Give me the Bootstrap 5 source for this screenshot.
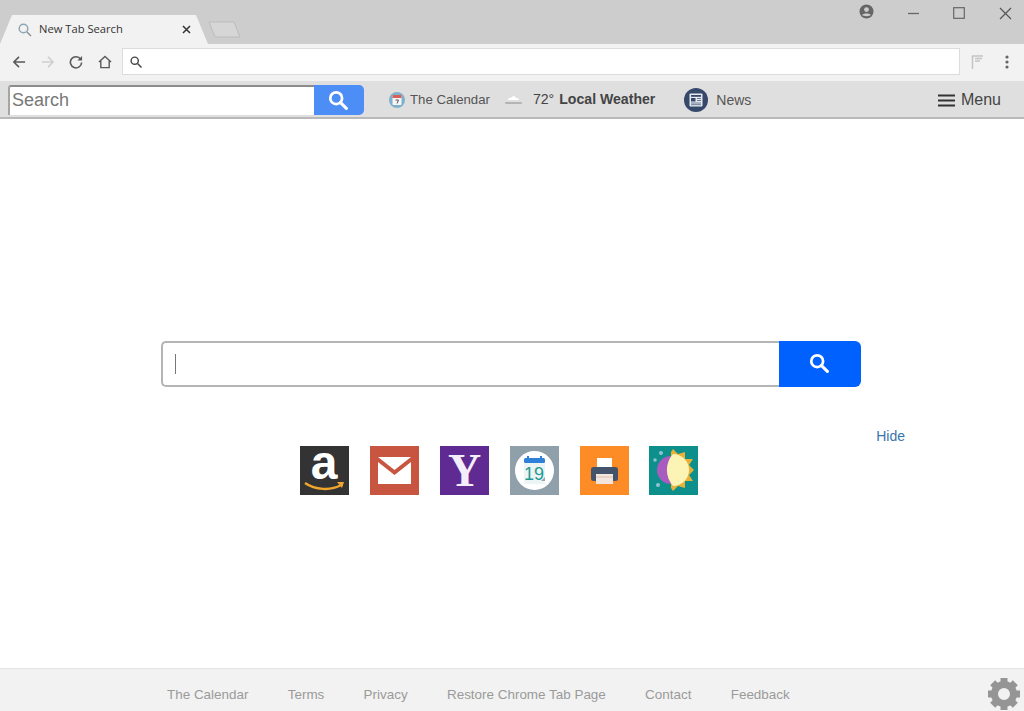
<!DOCTYPE html>
<html>
  <head>
    <title>New Tab Search</title>
    <link href="https://cdn.jsdelivr.net/npm/bootstrap@5.3.3/dist/css/bootstrap.min.css" rel="stylesheet" />
    <script src="https://cdn.jsdelivr.net/npm/bootstrap@5.3.3/dist/js/bootstrap.bundle.min.js"></script>
    <style>
      body { font-family: "Liberation Sans", Arial, sans-serif; background: #fff; overflow: hidden; }
      .page-wrap { height: 711px; width: 1024px; }

      .tab-strip { height: 44px; background: #cdcdcd; flex: none; }
      .active-tab { width: 208px; height: 29px; margin-top: 15px; background: #f2f2f2; padding-left: 18px; clip-path: polygon(12px 0, 196px 0, 208px 100%, 0 100%); font-family: "Open Sans", sans-serif; font-size: 11.2px; color: #333; flex: none; }
      .tab-title { margin-left: 7px; width: 143px; }
      .new-tab { width: 34px; height: 17px; margin-top: 21px; flex: none; }
      .win-controls { margin-right: -4px; }
      .avatar-icon { margin-top: 4px; }
      .win-btn { width: 46px; height: 26px; }

      .tool-strip { height: 37px; background: #f2f2f2; padding: 4px 0 6px 12px; flex: none; }
      .tool-icon { width: 14px; height: 14px; margin-right: 14.5px; }
      .omnibox { width: 838px; height: 27px; margin-left: -4px; background: #fff; border: 1px solid #dcdcdc; padding-left: 7px; flex: none; }
      .flag-icon { margin-left: 11px; }
      .kebab-icon { margin-left: 22px; }

      .ext-strip { height: 38px; background: #dfdfdf; border-bottom: 2px solid #b9b9b9; padding: 2px 0 0 8px; flex: none; color: #555; font-size: 13.2px; }
      .ext-search { width: 356px; height: 30px; flex: none; }
      .ext-search .form-control { height: 30px; min-height: 0; font-size: 18px; padding: 0 2px 2px; border-radius: 3px 0 0 0; border: 0; border-top: 2px solid #8c8c8c; border-left: 2px solid #a5a5a5; color: #777; box-shadow: none; }
      .ext-search .form-control::placeholder { color: #777; }
      .ext-search .btn { width: 50px; height: 30px; padding: 0 2px 0 0; background: #4c8df6; border: 0; border-radius: 0 5px 5px 0; }
      .ext-cal { margin-left: 25px; }
      .ext-cal span { margin-left: 5px; }
      .ext-weather { margin-left: 15px; color: #444; font-size: 14.1px; }
      .ext-weather .temp { margin-left: 11px; }
      .ext-weather b { margin-left: 5px; }
      .ext-news { margin-left: 29px; font-size: 14px; }
      .ext-news span { margin-left: 8px; }
      .ext-menu { margin-left: auto; margin-right: 23px; font-size: 16px; color: #444; }
      .ext-menu svg { margin-right: 6px; }

      .main-area { padding-top: 222px; }
      .big-search { width: 700px; height: 46px; margin-left: 161px; }
      .big-input { flex: 1; border: 2px solid #b5b5b5; border-right: 0; border-radius: 5px 0 0 5px; padding-left: 12px; }
      .caret-line { width: 1px; height: 20px; background: #777; }
      .big-btn { width: 82px; padding: 0 3px 2px 0; background: #0061ff; border: 0; border-radius: 0 6px 6px 0; }
      .tile-row { margin: 41px 0 0 300px; width: 605px; }
      .tile-list { gap: 20.9px; margin-top: 18px; }
      .tile-list svg { width: 49px; height: 49px; display: block; overflow: visible; }
      .hide-link { font-size: 14px; color: #3a74ab; text-decoration: none; margin-left: auto; line-height: 16px; }

      .foot-strip { height: 43px; background: #f2f2f2; border-top: 1px solid #e4e4e4; padding: 10px 0 0 167px; flex: none; font-size: 13.45px; gap: 39.3px; }
      .foot-strip a { color: #9a9a9a; text-decoration: none; }
      .gear-icon { margin-left: auto; margin-right: 4px; margin-top: -2px; }
    </style>
  </head>
  <body>
    <div class="page-wrap d-flex flex-column">

      <div class="tab-strip d-flex align-items-start">
        <div class="active-tab d-flex align-items-center">
          <svg width="14" height="14" viewBox="0 0 14 14"><circle cx="5.5" cy="5.5" r="4.3" fill="none" stroke="#8fa6b5" stroke-width="1.5"/><path d="M9 9l4 4" stroke="#8a949c" stroke-width="1.6"/></svg>
          <span class="tab-title">New Tab Search</span>
          <svg width="9" height="9" viewBox="0 0 9 9"><path d="M1 1l7 7M8 1l-7 7" stroke="#333" stroke-width="1.5"/></svg>
        </div>
        <svg class="new-tab" viewBox="0 0 34 17"><path d="M1 1h25l6 15H7z" fill="#d6d6d6" stroke="#bcbcbc"/></svg>
        <div class="win-controls d-flex align-items-start ms-auto">
          <svg class="avatar-icon me-3" width="15" height="15" viewBox="0 0 15 15"><circle cx="7.5" cy="7.5" r="7" fill="#666"/><circle cx="7.5" cy="5.6" r="2.4" fill="#cdcdcd"/><path d="M3.2 11c1-2 7.600-2 8.600 0-1.200 1.500-7.400 1.500-8.600 0z" fill="#cdcdcd"/></svg>
          <div class="win-btn d-flex align-items-center justify-content-center">
            <svg width="11" height="11" viewBox="0 0 11 11"><path d="M0 5.500h11" stroke="#666" stroke-width="1.300"/></svg>
          </div>
          <div class="win-btn d-flex align-items-center justify-content-center">
            <svg width="12" height="12" viewBox="0 0 12 12"><rect x=".7" y=".7" width="10.600" height="10.600" fill="none" stroke="#666" stroke-width="1.200"/></svg>
          </div>
          <div class="win-btn d-flex align-items-center justify-content-center">
            <svg width="13" height="13" viewBox="0 0 13 13"><path d="M1 1l11 11M12 1L1 12" stroke="#555" stroke-width="1.200"/></svg>
          </div>
        </div>
      </div>

      <div class="tool-strip d-flex align-items-center">
        <svg class="tool-icon" viewBox="0 0 15 15"><path d="M14 7.500H2M7.500 2L2 7.500 7.500 13" fill="none" stroke="#5a5a5a" stroke-width="1.700"/></svg>
        <svg class="tool-icon" viewBox="0 0 15 15"><path d="M1 7.500h12M7.500 2L13 7.500 7.500 13" fill="none" stroke="#d0d0d0" stroke-width="1.700"/></svg>
        <svg class="tool-icon" viewBox="0 0 15 15"><path d="M12.500 4.500A6 6 0 1 0 13.500 8" fill="none" stroke="#5a5a5a" stroke-width="1.700"/><path d="M14 1v5H9z" fill="#5a5a5a"/></svg>
        <svg class="tool-icon" viewBox="0 0 15 15"><path d="M1 7.500L7.500 1.500 14 7.500M3 6.500V13.500H12V6.500" fill="none" stroke="#5a5a5a" stroke-width="1.500"/></svg>
        <div class="omnibox d-flex align-items-center">
          <svg width="12" height="12" viewBox="0 0 12 12"><circle cx="4.700" cy="4.700" r="3.600" fill="none" stroke="#444" stroke-width="1.400"/><path d="M7.500 7.500l4 4" stroke="#444" stroke-width="1.500"/></svg>
        </div>
        <svg class="flag-icon" width="12" height="14" viewBox="0 0 12 14"><path d="M1.500 14V1H12M4 3.500h7M4 6h5" fill="none" stroke="#c4c4c4" stroke-width="1.500"/></svg>
        <svg class="kebab-icon" width="4" height="14" viewBox="0 0 4 14"><circle cx="2" cy="2" r="1.600" fill="#666"/><circle cx="2" cy="7" r="1.600" fill="#666"/><circle cx="2" cy="12" r="1.600" fill="#666"/></svg>
      </div>

      <div class="ext-strip d-flex align-items-center">
        <div class="ext-search input-group flex-nowrap">
          <input type="text" class="form-control" placeholder="Search" />
          <button type="button" class="btn d-flex align-items-center justify-content-center">
            <svg width="20" height="20" viewBox="0 0 22 22"><circle cx="9" cy="9" r="6.500" fill="none" stroke="#fff" stroke-width="3"/><path d="M13.800 13.800l6.400 6.400" stroke="#fff" stroke-width="3.400" stroke-linecap="round"/></svg>
          </button>
        </div>
        <div class="ext-cal d-flex align-items-center">
          <svg width="16" height="16" viewBox="0 0 16 16"><circle cx="8" cy="8" r="8" fill="#7fb1cb"/><rect x="3.500" y="3" width="9" height="10" rx="1" fill="#f6f6f6"/><rect x="3.500" y="3" width="9" height="3" fill="#d9605a"/><path d="M6.500 8h3l-1.500 3.500" fill="none" stroke="#555" stroke-width="1"/></svg>
          <span>The Calendar</span>
        </div>
        <div class="ext-weather d-flex align-items-center">
          <svg width="17" height="11" viewBox="0 0 17 11"><path d="M3 6c0-2 2-2.500 3-2 .8-2.500 4.500-2.500 5.200 0 1.500-.2 2.800 .8 2.800 2z" fill="#fff"/><rect y="8" width="17" height="2" rx="1" fill="#b4b4b4"/></svg>
          <span class="temp">72°</span>
          <b>Local Weather</b>
        </div>
        <div class="ext-news d-flex align-items-center">
          <svg width="24" height="24" viewBox="0 0 24 24"><circle cx="12" cy="12" r="12" fill="#36496b"/><rect x="5.500" y="5.500" width="13" height="13" rx="1" fill="#e6e9ee"/><rect x="7" y="7" width="10" height="1.800" fill="#36496b"/><rect x="7" y="10" width="4.500" height="3.500" fill="#36496b"/><path d="M13 10.500h4M13 12.500h4M7 15h10M7 16.700h10" stroke="#6b7a94"/></svg>
          <span>News</span>
        </div>
        <div class="ext-menu d-flex align-items-center">
          <svg width="17" height="13" viewBox="0 0 17 13"><path d="M0 1.500h17M0 6.500h17M0 11.500h17" stroke="#333" stroke-width="2.200"/></svg>
          Menu
        </div>
      </div>

      <div class="main-area flex-grow-1">
        <div class="big-search d-flex">
          <div class="big-input d-flex align-items-center"><div class="caret-line"></div></div>
          <button type="button" class="big-btn btn d-flex align-items-center justify-content-center">
            <svg width="20" height="20" viewBox="0 0 22 22"><circle cx="9" cy="9" r="6.500" fill="none" stroke="#fff" stroke-width="3"/><path d="M13.800 13.800l6.400 6.400" stroke="#fff" stroke-width="3.400" stroke-linecap="round"/></svg>
          </button>
        </div>
        <div class="tile-row d-flex align-items-start">
          <div class="tile-list d-flex">
            <svg viewBox="0 0 49 49"><rect width="49" height="49" fill="#333"/><text x="24" y="33" text-anchor="middle" font-family="Liberation Sans" font-weight="700" font-size="48" fill="#fff">a</text><path d="M5 37c10 7 26 8 36 2" fill="none" stroke="#f0a52c" stroke-width="2.500"/><path d="M37 36l7 0-2 6z" fill="#f0a52c"/></svg>
            <svg viewBox="0 0 49 49"><rect width="49" height="49" fill="#c8553f"/><path d="M8 11h33L24.500 24z" fill="#fff"/><path d="M8 16l16.500 13L41 16v22H8z" fill="#fff"/></svg>
            <svg viewBox="0 0 49 49"><rect width="49" height="49" fill="#5f2a91"/><text x="24.500" y="40" text-anchor="middle" font-family="Liberation Serif" font-weight="700" font-size="46" fill="#f4eefa">Y</text></svg>
            <svg viewBox="0 0 49 49"><rect width="49" height="49" fill="#8fa0aa"/><circle cx="24.500" cy="24.500" r="19.500" fill="#fff"/><rect x="14" y="15" width="21" height="23" fill="#edf4f4"/><rect x="14" y="12" width="21" height="5" rx="1.500" fill="#2f80d8"/><path d="M18 10v4M31 10v4" stroke="#2f80d8" stroke-width="2"/><text x="24" y="34" text-anchor="middle" font-family="Liberation Sans" font-size="18" fill="#1f9b93">19</text><path d="M31 35l4-4v4z" fill="#9aa9ae"/></svg>
            <svg viewBox="0 0 49 49"><rect width="49" height="49" fill="#fd8b26"/><rect x="17" y="12" width="15" height="12" fill="#fff"/><rect x="11" y="21" width="27" height="14" rx="2.500" fill="#43536b"/><rect x="16" y="28" width="17" height="10" fill="#f3e4de"/><path d="M16 31h17" stroke="#d9bdb3"/></svg>
            <svg viewBox="0 0 49 49"><rect width="49" height="49" fill="#0d8f8b"/><circle cx="22" cy="24" r="14" fill="#a85cc0"/><path d="M22 6L24 3l5 5 7-2 0 7 8 0-4 6 5 5-5 5 4 6-8 0 0 7-7-2-5 5-2-3z" fill="#e9b13a"/><path d="M24 8A16 16 0 0 1 24 40 24 24 0 0 1 24 8z" fill="#fbf4b4"/><circle cx="12" cy="7" r="2" fill="#8fc3cf"/><circle cx="6" cy="14" r="1.800" fill="#8fc3cf"/><circle cx="9" cy="39" r="2" fill="#8fc3cf"/></svg>
          </div>
          <a class="hide-link" href="#">Hide</a>
        </div>
      </div>

      <div class="foot-strip d-flex align-items-center">
        <a href="#">The Calendar</a>
        <a href="#">Terms</a>
        <a href="#">Privacy</a>
        <a href="#">Restore Chrome Tab Page</a>
        <a href="#">Contact</a>
        <a href="#">Feedback</a>
        <svg class="gear-icon" width="32" height="32" viewBox="0 0 32 32">
          <circle cx="16" cy="16" r="9.500" fill="none" stroke="#959595" stroke-width="7"/>
          <g fill="#959595">
            <rect x="12.500" y="0" width="7" height="6"/>
            <rect x="12.500" y="26" width="7" height="6"/>
            <rect x="0" y="12.500" width="6" height="7"/>
            <rect x="26" y="12.500" width="6" height="7"/>
            <rect x="12.500" y="0" width="7" height="6" transform="rotate(45 16 16)"/>
            <rect x="12.500" y="26" width="7" height="6" transform="rotate(45 16 16)"/>
            <rect x="0" y="12.500" width="6" height="7" transform="rotate(45 16 16)"/>
            <rect x="26" y="12.500" width="6" height="7" transform="rotate(45 16 16)"/>
          </g>
        </svg>
      </div>

    </div>
  </body>
</html>
